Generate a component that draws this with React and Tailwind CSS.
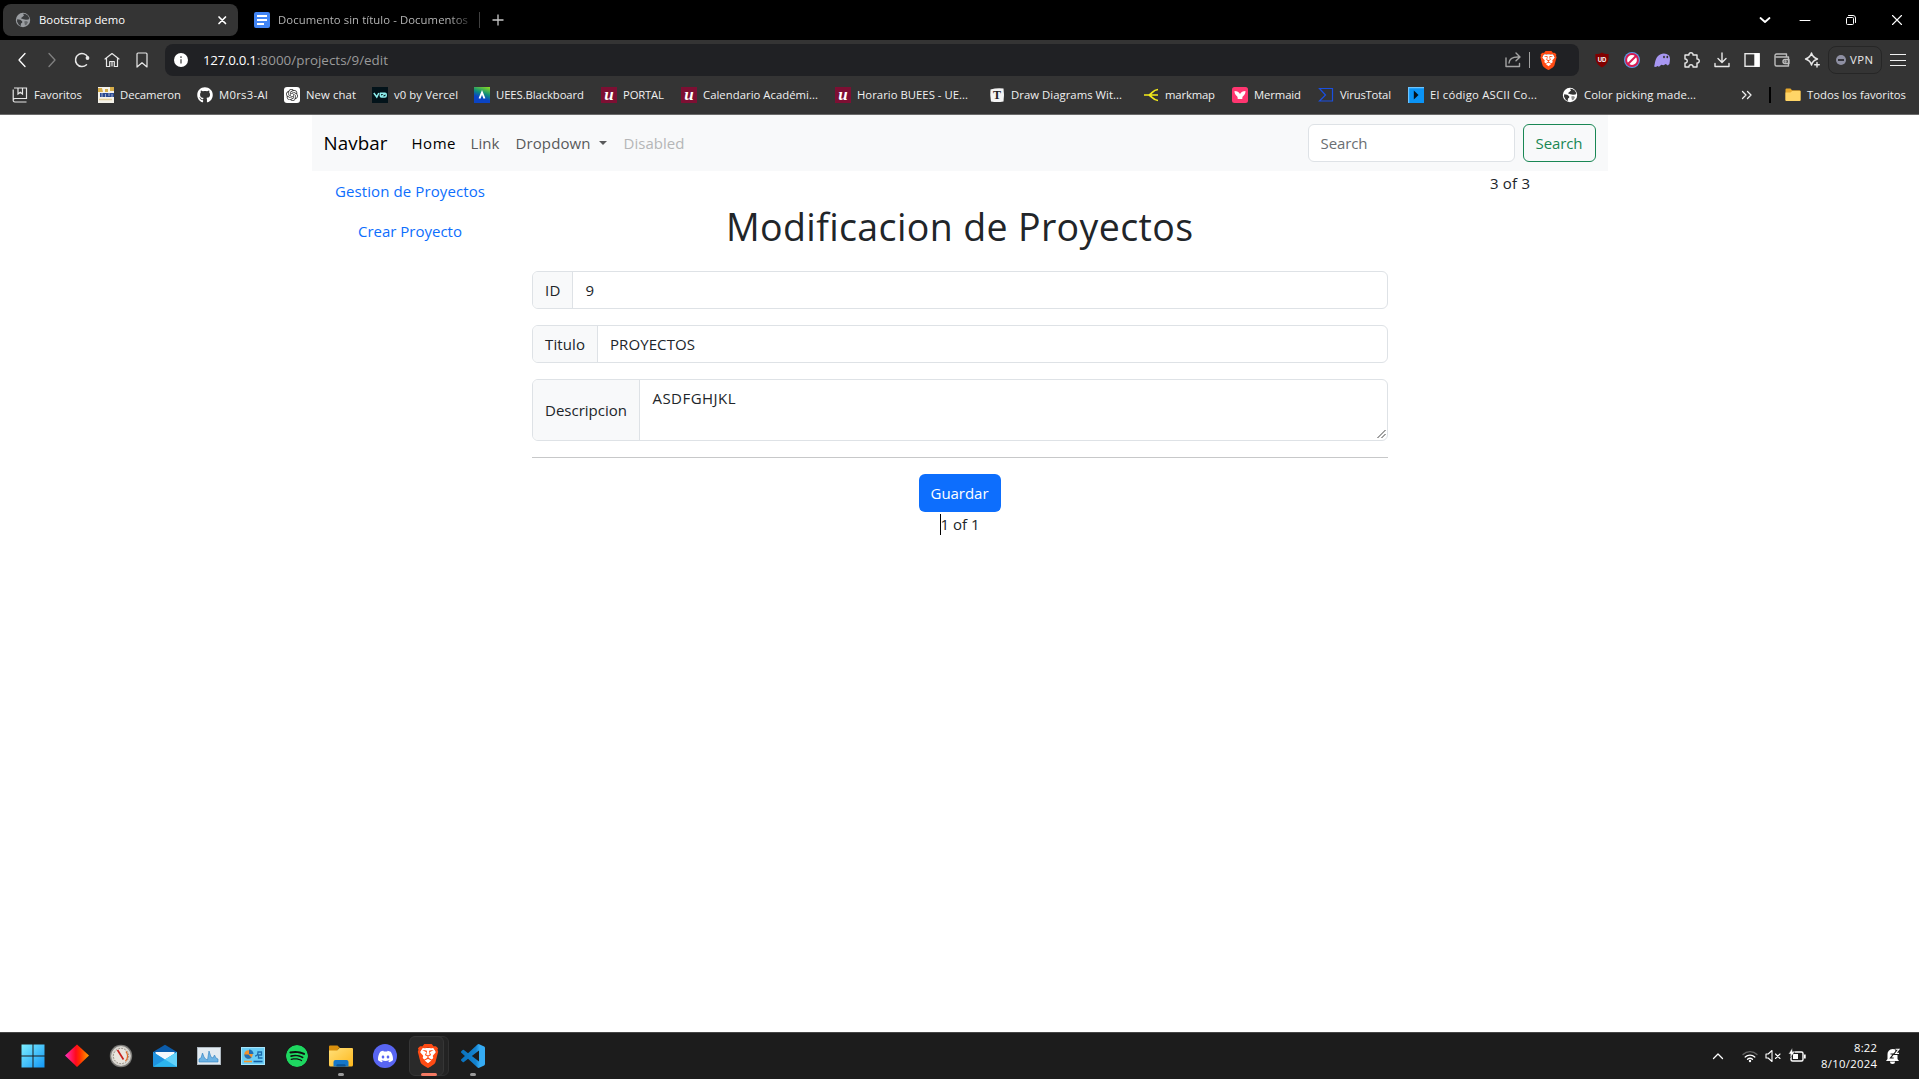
import { useLayoutEffect, useRef } from "react";
import { FaGithub } from "react-icons/fa";
import { SiBrave, SiDiscord, SiSpotify, SiOpenai } from "react-icons/si";

/* Text that is tracked so that it fills a given width */
function Fit({ w, className = "", children }) {
  const ref = useRef(null);
  useLayoutEffect(() => {
    const el = ref.current;
    el.style.letterSpacing = "0px";
    const range = document.createRange();
    range.selectNodeContents(el);
    const natural = range.getBoundingClientRect().width;
    const n = el.textContent.length;
    if (n > 1) el.style.letterSpacing = `${(w - natural) / (n - 1)}px`;
  }, [w]);
  return (
    <span ref={ref} style={{ width: w }} className={`block shrink-0 whitespace-nowrap ${className}`}>
      {children}
    </span>
  );
}

const line = { fill: "none", stroke: "currentColor", strokeLinecap: "round", strokeLinejoin: "round" };

function Globe({ bg, land, className }) {
  return (
    <svg viewBox="0 0 16 16" className={className}>
      <circle cx="8" cy="8" r="7.2" fill={bg} />
      <path d="M2.2 7.2l3 .5 2 1.6v1.5l-1.2.8-.4 2.7-2-1.7-1.6-3z" fill={land} />
      <path d="M8 1.8l1 1.6-1.4 1.3L5.8 6.2l2.6 1 2.6.5 2.6-.3.6-1.4-1.4-2.6L10.3 2z" fill={land} />
      <path d="M9.2 9.6l2-.5 1.8 1-1.2 2.5-1.8.6z" fill={land} opacity=".55" />
    </svg>
  );
}

function Brave({ className }) {
  return (
    <span className={`relative block ${className}`}>
      <svg viewBox="0 0 24 24" className="absolute inset-0 h-full w-full">
        <path d="M6 4h12l2 4-2.500 9L12 21l-5.500-4L4 8z" fill="#fff" />
      </svg>
      <SiBrave className="absolute inset-0 h-full w-full text-[#ff4b14]" />
    </span>
  );
}

/* ---------- tab strip ---------- */
function TabStrip() {
  return (
    <div className="flex h-10 bg-black pl-[3px] pt-1 text-[11.3px] text-white">
      <div className="flex h-8 w-[235px] items-center rounded-lg bg-[#343434] pl-[12px] pr-[10px]">
        <Globe bg="#9a9da1" land="#3a3c3e" className="mr-[8px] h-4 w-4" />
        <Fit w={86}>Bootstrap demo</Fit>
        <svg viewBox="0 0 12 12" className="ml-auto h-3 w-3" {...line} strokeWidth="1.7">
          <path d="M3 3l6.500 6.500M9.500 3L3 9.500" />
        </svg>
      </div>
      <div className="flex h-8 w-[241px] items-center pl-[16px]">
        <svg viewBox="0 0 16 16" className="mr-[8px] h-4 w-4">
          <rect width="16" height="16" rx="2" fill="#4285f4" />
          <path d="M3 4h10M3 8h10M3 12h7" stroke="#fff" strokeWidth="2" />
        </svg>
        <div className="w-[191px] overflow-hidden [mask-image:linear-gradient(to_right,#000_90%,#0004)]">
          <Fit w={190} className="text-[#b4b4b4]">Documento sin título - Documentos</Fit>
        </div>
      </div>
      <div className="mt-2 h-4 w-px bg-[#404040]" />
      <svg viewBox="0 0 12 12" className="ml-[12px] mt-[10px] h-3 w-3 text-[#c8c8c8]" {...line} strokeWidth="1.3" strokeLinecap="butt">
        <path d="M6 .5v11M.5 6h11" />
      </svg>
      <div className="ml-auto mr-[16px] flex h-8 items-center gap-[34px]">
        <svg viewBox="0 0 12 12" className="mr-[-6px] h-3 w-3" {...line} strokeWidth="1.8">
          <path d="M1.500 4L6 8l4.500-4" />
        </svg>
        <svg viewBox="0 0 12 12" className="h-3 w-3" {...line} strokeWidth="1">
          <path d="M1 6.500h10" />
        </svg>
        <svg viewBox="0 0 12 12" className="h-3 w-3" {...line} strokeWidth="1">
          <rect x="1.500" y="3.500" width="7" height="7" rx="1" />
          <path d="M3.500 1.500h4.500a2.500 2.500 0 0 1 2.500 2.500v4.500" />
        </svg>
        <svg viewBox="0 0 12 12" className="h-3 w-3" {...line} strokeWidth="1.1">
          <path d="M1.500 1.500l9 9M10.500 1.500l-9 9" />
        </svg>
      </div>
    </div>
  );
}

/* ---------- toolbar ---------- */
const tool = "h-5 w-5 shrink-0";

function Toolbar() {
  return (
    <div className="flex h-10 items-center bg-[#343434] pl-[12px] text-[#e8e8e8]">
      <div className="flex w-[153px] gap-[10px]">
        <svg viewBox="0 0 20 20" className={`${tool} text-white`} {...line} strokeWidth="1.300">
          <path d="M13 3.500L7 10l6 6.500" />
        </svg>
        <svg viewBox="0 0 20 20" className={`${tool} text-[#818181]`} {...line} strokeWidth="1.300">
          <path d="M7 3.500l6 6.500-6 6.500" />
        </svg>
        <svg viewBox="0 0 20 20" className={tool} {...line} strokeWidth="1.500">
          <path d="M14.500 14.800A6.500 6.500 0 1 1 16 7.500" />
          <circle cx="15.500" cy="8" r="1.900" fill="currentColor" stroke="none" />
        </svg>
        <svg viewBox="0 0 20 20" className={tool} {...line} strokeWidth="1.200">
          <path d="M3 9l7-5.500L17 9M4.500 8v8.500h3.200v-5h4.600v5h3.200V8M10 12v4" />
        </svg>
        <svg viewBox="0 0 20 20" className={tool} {...line} strokeWidth="1.200">
          <path d="M5 4a1 1 0 0 1 1-1h8a1 1 0 0 1 1 1v13l-5-4.300L5 17z" />
        </svg>
      </div>
      <div className="flex h-8 w-[1414px] items-center rounded-lg bg-[#202124] pl-[9px]">
        <svg viewBox="0 0 16 16" className="mr-[15px] h-[14px] w-[14px]">
          <circle cx="8" cy="8" r="8" fill="#fff" />
          <path d="M8 7v5M8 3.800v1.800" stroke="#666" strokeWidth="1.800" />
        </svg>
        <div className="flex text-[13.400px]">
          <Fit w={54} className="text-white">127.0.0.1</Fit>
          <Fit w={131} className="text-[#9a9a9a]">:8000/projects/9/edit</Fit>
        </div>
        <svg viewBox="0 0 20 20" className="ml-auto h-5 w-5 text-[#a3a3a3]" {...line} strokeWidth="1.400">
          <path d="M3 8v8.500h13.500v-3M6 13c.4-4.500 3.500-6.500 10.500-6M13 3l4 4-4 3.800" />
        </svg>
        <div className="ml-[6px] h-[16px] w-px bg-[#a0a0a0]" />
        <Brave className="ml-[9px] mr-[21px] h-[19px] w-[19px]" />
      </div>
      <div className="ml-[13px] flex items-center gap-[10px]">
        <svg viewBox="0 0 20 20" className={tool}>
          <path d="M10 2.500c2 1.400 4.300 1.600 6.600 1.500.4 6.500-1 10.500-6.600 13.500C4.400 14.500 3 10.500 3.400 4 5.700 4.100 8 3.900 10 2.500z" fill="#800000" />
          <text x="10" y="11.500" textAnchor="middle" fontSize="6" fontWeight="700" fill="#fff" className="font-['Inter']">UD</text>
        </svg>
        <svg viewBox="0 0 20 20" className={tool}>
          <circle cx="10" cy="10" r="8" fill="#5a9be8" />
          <circle cx="10" cy="10" r="5.900" fill="#fff" stroke="#d81b52" strokeWidth="2" />
          <path d="M6 14l8-8" stroke="#d81b52" strokeWidth="2" />
        </svg>
        <svg viewBox="0 0 20 20" className={tool}>
          <path d="M2 16.500C3 15 2.800 9 6 6c3-3.200 8-3.400 11-.5 1.500 2 1 5 .4 8.500l-1.600 1.500-2-1.500-2.300 1.200-2.200-.5L7 16.800l-1.700-.8L4 16.900z" fill="#a897f2" />
          <ellipse cx="12" cy="7" rx=".9" ry="1.200" fill="#333" />
          <ellipse cx="15.300" cy="7" rx=".9" ry="1.200" fill="#333" />
        </svg>
        <svg viewBox="0 0 20 20" className={tool} {...line} strokeWidth="1.400">
          <path d="M3 5h4c-.6-3 4.500-3 4 0h4v4c3-.6 3 4.500 0 4v4h-4c.5-3-4.500-3-4 0H3v-4c3 .3 3-4.300 0-4z" />
        </svg>
        <svg viewBox="0 0 20 20" className={tool} {...line} strokeWidth="1.400">
          <path d="M10 3v9M6 8.500l4 4 4-4M3 13.500v3h14v-3" />
        </svg>
        <svg viewBox="0 0 20 20" className={tool} fill="none" stroke="currentColor" strokeWidth="1.400">
          <rect x="3" y="3.700" width="14" height="12.600" />
          <path d="M13 4h4v12h-4z" fill="#fff" stroke="#fff" />
        </svg>
        <svg viewBox="0 0 20 20" className={`${tool} text-[#bdbdbd]`} {...line} strokeWidth="1.400">
          <path d="M14.500 6.500V4H4.500A1.500 1.500 0 0 0 3 5.500v9A1.500 1.500 0 0 0 4.500 16h12V7H4.300M17 9.500h-4a2 2 0 0 0 0 4h4z" />
          <circle cx="13.500" cy="11.500" r=".5" />
        </svg>
        <svg viewBox="0 0 20 20" className={tool} {...line} strokeWidth="1.400">
          <path d="M9.500 3c.8 3.500 2 4.700 6 6-4 1.300-5.200 2.500-6 6-.8-3.500-2-4.700-6-6 4-1.300 5.200-2.500 6-6z" />
          <path d="M15 12.500v4.500M12.700 14.800h4.600" />
        </svg>
      </div>
      <div className="ml-[6px] flex h-7 w-[54px] items-center rounded-lg border border-[#262626] pl-[7px] text-[11.300px]">
        <span className="mr-[4px] flex h-[10px] w-[10px] items-center justify-center rounded-full bg-[#8f90a3]">
          <span className="h-[1.500px] w-1.5 bg-[#34343c]" />
        </span>
        <Fit w={23}>VPN</Fit>
      </div>
      <svg viewBox="0 0 16 14" className="ml-[8px] h-[14px] w-4" stroke="#f0f0f0" strokeWidth="1">
        <path d="M0 1.500h16M0 7.500h16M0 12.500h16" />
      </svg>
    </div>
  );
}

/* ---------- bookmarks ---------- */
const UeesIcon = () => (
  <svg viewBox="0 0 16 16" className="h-4 w-4">
    <rect width="16" height="16" fill="#7d0f33" />
    <text x="8" y="13" textAnchor="middle" fontSize="17" fontStyle="italic" fontWeight="700" fill="#fff" className="font-['Liberation_Serif']">u</text>
  </svg>
);

const BOOKMARKS = [
  { w: "w-[86px]", t: 48, label: "Favoritos", icon: (
    <svg viewBox="0 0 16 16" className="h-4 w-4" fill="none" stroke="#e6e6e6" strokeWidth="1.200">
      <path d="M2 1h12.500v10.500H2.800A1.600 1.600 0 0 0 1.200 13.200V2.500M1.200 13.200A1.600 1.600 0 0 0 2.800 15h11.700M6 1v6l2.300-1.800L10.500 7V1" />
    </svg>) },
  { w: "w-[99px]", t: 61, label: "Decameron", icon: (
    <svg viewBox="0 0 16 16" className="h-4 w-4">
      <rect width="16" height="16" fill="#f4f2ea" />
      <path d="M0 1h4l1 4H0zM7 2h3v3H7zM12 0h4v4h-4z" fill="#d7ae4a" />
      <path d="M2 6h14v4H2z" fill="#2b4a92" />
      <path d="M4 6v4M7.500 7v3M11 6v3M14 7v3" stroke="#d8d8e0" strokeWidth=".7" />
      <path d="M1 12.500h13" stroke="#e5cf9a" strokeWidth="1.500" />
    </svg>) },
  { w: "w-[87px]", t: 49, label: "M0rs3-AI", icon: <FaGithub className="h-4 w-4 text-white" /> },
  { w: "w-[88px]", t: 50, label: "New chat", icon: (
    <span className="flex h-4 w-4 items-center justify-center rounded-[3px] bg-white">
      <SiOpenai className="h-3 w-3 text-[#333]" />
    </span>) },
  { w: "w-[102px]", t: 64, label: "v0 by Vercel", icon: (
    <svg viewBox="0 0 16 16" className="h-4 w-4">
      <rect width="16" height="16" fill="#03131a" />
      <path d="M1.800 6l3 4 2-4M8.500 6.200h4.500q1.200 0 1.200 1.200v1.400q0 1.200-1.200 1.200H9.500q-1.200 0-1.200-1.200zM9 9.500l4.500-3" fill="none" stroke="#8ff0ee" strokeWidth="1.500" />
    </svg>) },
  { w: "w-[127px]", t: 88, label: "UEES.Blackboard", icon: (
    <span className="flex h-4 w-4 bg-[linear-gradient(20deg,#0a44c4_35%,#0f8f7a_60%,#8fe01c)]">
      <svg viewBox="0 0 16 16" className="h-4 w-4"><path d="M5.500 11.500l2.500-6 2.500 6" fill="none" stroke="#fff" strokeWidth="1.900" /></svg>
    </span>) },
  { w: "w-[80px]", t: 41, label: "PORTAL", icon: <UeesIcon /> },
  { w: "w-[154px]", t: 115, label: "Calendario Académi...", icon: <UeesIcon /> },
  { w: "w-[154px]", t: 111, label: "Horario BUEES - UE...", icon: <UeesIcon /> },
  { w: "w-[154px]", t: 111, label: "Draw Diagrams Wit...", icon: (
    <svg viewBox="0 0 16 16" className="h-4 w-4">
      <path d="M1.500 2.500Q8 .5 14.500 1.500 15.500 8 14.500 14.500 8 15.500 2 14.500 .8 8 1.500 2.500z" fill="#f4f4f4" />
      <text x="8" y="12.200" textAnchor="middle" fontSize="12" fontWeight="700" fill="#222" className="font-['Liberation_Serif']">T</text>
    </svg>) },
  { w: "w-[89px]", t: 50, label: "markmap", icon: (
    <svg viewBox="0 0 16 16" className="h-4 w-4" fill="none" stroke="#f2ea1a" strokeWidth="1.700">
      <path d="M1 8h14M15 2.500C10 2.800 9.500 6 6 8c3.500 2 4 5.200 9 5.500" />
    </svg>) },
  { w: "w-[86px]", t: 47, label: "Mermaid", icon: (
    <svg viewBox="0 0 16 16" className="h-4 w-4">
      <rect width="16" height="16" rx="2.500" fill="#ff3670" />
      <path d="M2.500 4c2.700 0 4.500 1 5.500 3 1-2 2.800-3 5.500-3 0 2.500-.9 3.900-2.200 4.900-.9.700-1 1.300-1 3.100H5.700c0-1.800-.1-2.400-1-3.100C3.400 7.900 2.500 6.500 2.500 4z" fill="#fff" />
    </svg>) },
  { w: "w-[90px]", t: 51, label: "VirusTotal", icon: (
    <svg viewBox="0 0 16 16" className="h-4 w-4" fill="none" stroke="#1a4fe0" strokeWidth="1.200">
      <path d="M1.500 1.500h13v12.500h-13L7.500 8z" />
    </svg>) },
  { w: "w-[154px]", t: 107, label: "El código ASCII Co...", icon: (
    <svg viewBox="0 0 16 16" className="h-4 w-4">
      <rect width="16" height="16" fill="#0a93f5" />
      <path d="M0 0h16v1.200H1.200V16H0z" fill="#6cc4ff" />
      <path d="M5.800 3.500L10.500 8l-4.700 4.500z" fill="#06121c" />
    </svg>) },
  { w: "w-[180px]", t: 112, label: "Color picking made...", icon: <Globe bg="#fff" land="#343434" className="h-4 w-4" /> },
];

function Bookmarks() {
  return (
    <div className="flex h-[35px] items-center border-b border-[#6a6a6a] bg-[#343434] pb-[4px] pl-3 text-[11.300px] text-[#f0f0f0]">
      {BOOKMARKS.map((b) => (
        <div key={b.label} className={`flex shrink-0 items-center gap-[6px] ${b.w}`}>
          <span className="h-4 w-4 shrink-0">{b.icon}</span>
          <Fit w={b.t}>{b.label}</Fit>
        </div>
      ))}
      <svg viewBox="0 0 12 12" className="ml-[-1px] h-3 w-3" {...line} strokeWidth="1.300">
        <path d="M1.500 2.500L5 6 1.500 9.500M6.500 2.500L10 6 6.500 9.500" />
      </svg>
      <div className="ml-[16px] h-4 w-[2px] bg-black" />
      <svg viewBox="0 0 16 16" className="ml-[14px] mr-[6px] h-4 w-4">
        <path d="M.5 2.500q0-1 1-1h4l1.500 1.800h7.500q1 0 1 1V13q0 1-1 1h-13q-1 0-1-1z" fill="#e8a92c" />
        <path d="M.5 5.500h5L7.200 4h8.300v9q0 1-1 1h-13q-1 0-1-1z" fill="#ffd567" />
      </svg>
      <Fit w={99}>Todos los favoritos</Fit>
    </div>
  );
}

/* ---------- web page ---------- */
function Navbar() {
  return (
    <nav className="mx-auto flex h-14 w-[1296px] items-center bg-[#f8f9fa] pl-3 pr-3">
      <Fit w={64} className="mr-[24px] text-[18.800px] text-black">Navbar</Fit>
      <Fit w={44} className="mr-[15px] text-black">Home</Fit>
      <Fit w={29} className="mr-[16px] text-[#595a5b]">Link</Fit>
      <Fit w={75} className="text-[#595a5b]">Dropdown</Fit>
      <span className="ml-[8px] mr-[17px] border-x-[4px] border-t-[4px] border-x-transparent border-t-[#595a5b]" />
      <Fit w={61} className="text-[#b5b6b7]">Disabled</Fit>
      <input placeholder="Search" className="ml-auto mr-2 h-[38px] w-[207px] rounded-md border border-[#dee2e6] bg-white px-3 tracking-[-0.1px] placeholder:text-[#6a6e72]" />
      <button className="flex h-[38px] w-[73px] items-center justify-center rounded-md border border-[#198754] text-[#198754]">
        <Fit w={47}>Search</Fit>
      </button>
    </nav>
  );
}

function Field({ label, lw, width, height = "h-[38px]", children }) {
  return (
    <div className={`mb-4 flex overflow-hidden rounded-md border border-[#dee2e6] ${height}`}>
      <div className={`flex shrink-0 items-center border-r border-[#dee2e6] bg-[#f8f9fa] pl-[12.500px] ${width}`}>
        <Fit w={lw}>{label}</Fit>
      </div>
      {children}
    </div>
  );
}

function Page() {
  return (
    <main className="flex-1 bg-white text-[15px] leading-6 text-[#212529]">
      <Navbar />
      <div className="mx-auto flex w-[1320px]">
        <div className="flex w-[220px] flex-col items-center pl-px text-[#0d6efd]">
          <a className="flex h-10 items-center"><Fit w={150}>Gestion de Proyectos</Fit></a>
          <a className="flex h-10 items-center"><Fit w={104}>Crear Proyecto</Fit></a>
        </div>
        <div className="flex w-[880px] flex-col px-3 pt-8">
          <h1 className="mb-5 flex h-12 items-center justify-center text-[37.500px] leading-[48px]">
            <Fit w={467}>Modificacion de Proyectos</Fit>
          </h1>
          <Field label="ID" lw={15.5} width="w-[40px]">
            <div className="flex items-center pl-[13px]">9</div>
          </Field>
          <Field label="Titulo" lw={40} width="w-[65px]">
            <div className="flex items-center pl-[12.500px]"><Fit w={85}>PROYECTOS</Fit></div>
          </Field>
          <Field label="Descripcion" lw={82} width="w-[107px]" height="h-[62px]">
            <div className="flex flex-1 justify-between pl-[13px] pt-[6px]">
              <Fit w={83}>ASDFGHJKL</Fit>
              <svg viewBox="0 0 12 12" className="mb-px h-3 w-3 self-end" stroke="#444" strokeWidth="1" fill="none">
                <path d="M2.500 11L10.500 3M6.500 11L10.500 7" />
              </svg>
            </div>
          </Field>
          <hr className="mb-4 border-[#c7c8c9]" />
          <div className="flex flex-col items-center">
            <button className="flex h-[38px] w-[82px] items-center justify-center rounded-md bg-[#0d6efd] text-white">
              <Fit w={58}>Guardar</Fit>
            </button>
            <div className="flex items-center">
              <span className="h-[21px] w-px bg-black" />
              <Fit w={39}>1 of 1</Fit>
            </div>
          </div>
        </div>
        <div className="flex w-[220px] justify-center pl-px"><Fit w={40}>3 of 3</Fit></div>
      </div>
    </main>
  );
}

/* ---------- taskbar ---------- */
const big = "h-6 w-6";

const APPS = [
  { id: "start", icon: (
    <svg viewBox="0 0 24 24" className={big}>
      <defs><linearGradient id="win" gradientUnits="userSpaceOnUse" x1="0" y1="0" x2="24" y2="24"><stop stopColor="#7ff0ff" /><stop offset="1" stopColor="#1095f5" /></linearGradient></defs>
      <path d="M.5.500h11v11H.5zM12.500.500h11v11h-11zM.5 12.500h11v11H.5zM12.500 12.500h11v11h-11z" fill="url(#win)" />
    </svg>) },
  { id: "diamond", icon: (
    <svg viewBox="0 0 24 24" className={big}>
      <defs><linearGradient id="dia"><stop stopColor="#ff2fc0" /><stop offset=".45" stopColor="#ff0a1c" /><stop offset=".6" stopColor="#ff2a00" /><stop offset="1" stopColor="#ffa000" /></linearGradient></defs>
      <path d="M12 .5L24 11.500 12 23 0 11.500z" fill="url(#dia)" />
    </svg>) },
  { id: "gauge", icon: (
    <svg viewBox="0 0 24 24" className={big}>
      <circle cx="12" cy="12" r="11.200" fill="#7c7b78" />
      <circle cx="12" cy="12" r="9.900" fill="#d8d5cf" />
      <circle cx="12" cy="12" r="7.600" fill="#e9e5de" stroke="#8d867c" strokeWidth="1" strokeDasharray="1.500 1.500" />
      <path d="M17 7.500a7 7 0 0 1-.5 9.500" fill="none" stroke="#e06c2b" strokeWidth="1.300" />
      <path d="M8.500 6l6 9.500" stroke="#c8201c" strokeWidth="1.700" />
    </svg>) },
  { id: "mail", icon: (
    <svg viewBox="0 0 24 24" className={big}>
      <path d="M0 8L12 .8 24 8v2H0z" fill="#0b5cab" />
      <path d="M2.500 8h19v8h-19z" fill="#f4f8fc" />
      <path d="M0 8l12 8 12-8v13.500q0 1.300-1.300 1.300H1.300Q0 22.800 0 21.500z" fill="#2cb5ee" />
      <path d="M0 22.800L24 8v14.800z" fill="#2cb5ee" />
      <path d="M12 15.400L24 8v14.800z" fill="#63d2fa" />
      <path d="M0 8l12 7.400L0 22.800z" fill="#1f93e0" />
    </svg>) },
  { id: "monitor", icon: (
    <svg viewBox="0 0 24 24" className={big}>
      <rect x=".5" y="3.500" width="23" height="17" fill="#e3ebf1" stroke="#aeb8c0" />
      <path d="M2 18v-3l2-1 1.500-5 1.500 4 1.500 2 2 1 1.500-9L14 13l2 1 1.500-3 1.500 3 2 1v3z" fill="#6db3e4" stroke="#2d7fc0" strokeWidth=".6" />
    </svg>) },
  { id: "panel", icon: (
    <svg viewBox="0 0 24 24" className={big}>
      <rect x=".5" y="3.500" width="23" height="17" fill="#6bcdf5" stroke="#a6e4fb" />
      <circle cx="7.500" cy="10.500" r="4.200" fill="#f2912c" />
      <path d="M7.500 10.500H3.300a4.200 4.200 0 0 0 7.200 3z" fill="#1f6fb5" />
      <path d="M8 10V5.500A4.500 4.500 0 0 1 12.500 10z" fill="#1f6fb5" />
      <path d="M14 12q3 0 3-4h3.500v3h-3v3h4" stroke="#1c6cae" strokeWidth="1.300" fill="none" />
      <path d="M3 17.500h8" stroke="#f5962a" strokeWidth="1.600" /><path d="M12.500 17.500h9" stroke="#135fa5" strokeWidth="1.600" />
    </svg>) },
  { id: "spotify", icon: (
    <span className="flex h-6 w-6 items-center justify-center">
      <SiSpotify className="h-[22px] w-[22px] rounded-full bg-[#101010] text-[#1ed760]" />
    </span>) },
  { id: "files", mark: "bg-[#9a9a9a] w-[6px]", icon: (
    <svg viewBox="0 0 24 24" className={big}>
      <defs><linearGradient id="fol" x1="0" y1="0" x2="1" y2="1"><stop stopColor="#ffe07a" /><stop offset="1" stopColor="#ffb81c" /></linearGradient></defs>
      <path d="M0 2.500Q0 1.500 1 1.500h7.500L11 4h-1L8 7H0z" fill="#d98f0c" />
      <path d="M0 6.500h8L10.500 4H23q1 0 1 1v16q0 1.500-1.500 1.500h-21Q0 22.500 0 21z" fill="url(#fol)" />
      <path d="M4.500 22.500V18q0-2 2-2h11q2 0 2 2v4.500z" fill="#1577c9" />
      <path d="M7.500 22.500v-1.200q0-1 1-1h7q1 0 1 1v1.200z" fill="#0b5597" />
    </svg>) },
  { id: "discord", icon: (
    <span className="flex h-6 w-6 items-center justify-center rounded-full bg-[#5865f2]">
      <SiDiscord className="h-[15px] w-[15px] text-white" />
    </span>) },
  { id: "brave", active: true, mark: "bg-[#f47a63] w-4", icon: <Brave className={big} /> },
  { id: "code", mark: "bg-[#9a9a9a] w-[6px]", icon: (
    <svg viewBox="0 0 24 24" className={big}>
      <defs><linearGradient id="vsc"><stop stopColor="#0a72bd" /><stop offset=".62" stopColor="#1483d0" /><stop offset=".78" stopColor="#35abf3" /></linearGradient></defs>
      <path fill="url(#vsc)" d="M23.150 2.587L18.210.210a1.494 1.494 0 0 0-1.705.290l-9.460 8.630-4.120-3.128a.999.999 0 0 0-1.276.057L.327 7.261A1 1 0 0 0 .326 8.740L3.899 12 .326 15.260a1 1 0 0 0 .001 1.479L1.650 17.940a.999.999 0 0 0 1.276.057l4.120-3.128 9.460 8.630a1.492 1.492 0 0 0 1.704.290l4.942-2.377A1.500 1.500 0 0 0 24 20.060V3.939a1.500 1.500 0 0 0-.850-1.352zm-5.146 14.861L10.826 12l7.178-5.448v10.896z" />
    </svg>) },
];

function Taskbar() {
  return (
    <footer className="flex h-[47px] items-center border-t border-[#454545] bg-[#1c1c1c] pl-[11px] text-white">
      {APPS.map((a) => (
        <div key={a.id} className="relative flex h-full w-11 items-center justify-center">
          {a.active && (
            <>
              <span className="absolute left-[7px] top-[3px] h-10 w-[35px] rounded-md border border-[#303030] bg-[#232323]" />
              <span className="absolute left-[2px] top-[3px] h-10 w-[35px] rounded-md border border-[#363636] bg-[#2a2a2a]" />
            </>
          )}
          <span className={a.active ? "relative mr-[2px]" : "relative"}>{a.icon}</span>
          {a.mark && (
            <span className={`absolute bottom-[3px] h-[3px] rounded-full ${a.mark} ${a.active ? "left-[14px]" : ""}`} />
          )}
        </div>
      ))}
      <svg viewBox="0 0 12 12" className="ml-auto mr-[18px] h-3 w-3" {...line} strokeWidth="1.300">
        <path d="M1.500 8.500L6 4l4.500 4.500" />
      </svg>
      <svg viewBox="0 0 16 16" className="mr-[7px] h-4 w-4" fill="none" strokeWidth="1.300" strokeLinecap="round">
        <path d="M1 6.500a10 10 0 0 1 14 0" stroke="#666" />
        <path d="M3.200 9a7 7 0 0 1 9.600 0M5.500 11.300a3.800 3.800 0 0 1 5 0" stroke="#fff" />
        <circle cx="8" cy="13" r="1.200" fill="#fff" />
      </svg>
      <svg viewBox="0 0 16 16" className="mr-[7px] h-4 w-4" {...line} strokeWidth="1.100">
        <path d="M1 6h2.200L7 2.500v11L3.200 10H1zM10.500 6l4.500 4.500M15 6l-4.500 4.500" />
      </svg>
      <svg viewBox="0 0 18 16" className="mr-[15px] h-4 w-[18px]">
        <rect x="3" y="4" width="12" height="9" rx="1.500" fill="none" stroke="#fff" strokeWidth="1.400" />
        <path d="M5 6h5v5H5zM16 6.500h1.700v4H16z" fill="#fff" />
        <path d="M4.200 0L.5 6h2.300L2 10l5-6.200H4.500z" fill="#fff" stroke="#1c1c1c" strokeWidth=".5" />
      </svg>
      <div className="mr-[8px] flex flex-col items-end text-[11.300px] leading-4">
        <Fit w={23}>8:22</Fit>
        <Fit w={56}>8/10/2024</Fit>
      </div>
      <svg viewBox="0 0 16 16" className="mr-[18px] h-4 w-4">
        <path d="M2.500 11V6.500a5 5 0 0 1 5-5.500Q12.500 1 12.500 6.500V11l1.500 2H1zM5 13.500h5a2.500 2.500 0 0 1-5 0z" fill="#fff" />
        <path d="M5.500 6h3l-3 4h3.200" fill="none" stroke="#1c1c1c" strokeWidth="1.200" />
        <path d="M10 1h4l-3.500 4.500H14" fill="none" stroke="#1c1c1c" strokeWidth="3" />
        <path d="M10.500 1.200H14l-3.300 4.200H14" fill="none" stroke="#fff" strokeWidth="1.100" />
      </svg>
    </footer>
  );
}

export default function App() {
  return (
    <div className="flex h-[1079px] w-[1919px] flex-col overflow-hidden bg-white font-['Open_Sans','Noto_Sans',sans-serif]">
      <TabStrip />
      <Toolbar />
      <Bookmarks />
      <Page />
      <Taskbar />
    </div>
  );
}
